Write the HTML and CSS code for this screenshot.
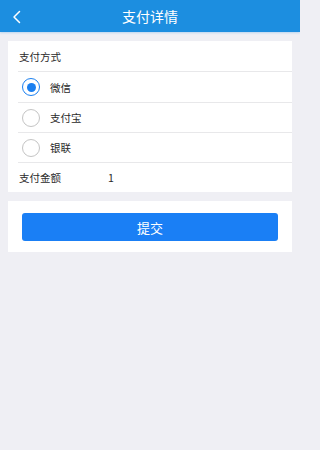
FILE: index.html
```html
<!DOCTYPE html>
<html lang="zh">
<head>
<meta charset="utf-8">
<link rel="stylesheet" href="styles.css">
</head>
<body>
<header class="nav">
  <svg class="back" width="10" height="14" viewBox="0 0 10 14"><path d="M7.5 1.5 L2 7 L7.5 12.5" fill="none" stroke="#fff" stroke-width="1.5" stroke-linecap="round" stroke-linejoin="round"/></svg>
  <h1 class="title">支付详情</h1>
</header>
<section class="card">
  <div class="row head">支付方式</div>
  <div class="list">
    <div class="row opt first"><span class="radio on"></span><span class="lbl">微信</span></div>
    <div class="row opt"><span class="radio"></span><span class="lbl">支付宝</span></div>
    <div class="row opt"><span class="radio"></span><span class="lbl">银联</span></div>
    <div class="row amount"><span class="k">支付金额</span><span class="v">1</span></div>
  </div>
</section>
<section class="card submit-card">
  <button class="submit">提交</button>
</section>
</body>
</html>
```
FILE: styles.css
```css
html, body {
  margin: 0;
  padding: 0;
  background: #efeff4;
  font-family: "Noto Sans CJK SC", "Noto Sans", sans-serif;
  color: #2a2a2a;
}
body {
  width: 300px;
}
.nav {
  height: 32px;
  background: #1c8ee0;
  display: flex;
  align-items: center;
  justify-content: center;
  position: relative;
  box-shadow: 0 1px 2px rgba(27,141,224,0.25);
}
.back {
  position: absolute;
  left: 12px;
  top: 10px;
}
.title {
  margin: 0;
  font-size: 14px;
  font-weight: normal;
  color: #fff;
}
.card {
  background: #fff;
  margin: 9px 8px 0;
}
.row {
  height: 30px;
  box-sizing: border-box;
  display: flex;
  align-items: center;
  font-size: 10.5px;
}
.head {
  padding-left: 11px;
}
.list {
  margin-left: 10px;
}
.list .row {
  border-top: 1px solid #e8e8ea;
}
.list .first {
  height: 31px;
}
.opt {
  padding-left: 4px;
}
.radio {
  width: 18px;
  height: 18px;
  border: 1px solid #c4c4c4;
  border-radius: 50%;
  box-sizing: border-box;
  display: flex;
  align-items: center;
  justify-content: center;
}
.radio.on {
  border: 1.5px solid #1a7ff0;
}
.radio.on::after {
  content: "";
  width: 9px;
  height: 9px;
  border-radius: 50%;
  background: #1a7ff0;
}
.lbl {
  margin-left: 10px;
}
.amount {
  margin-left: -10px;
  padding-left: 11px;
  border-top: none !important;
  position: relative;
}
.amount::before {
  content: "";
  position: absolute;
  left: 10px;
  right: 0;
  top: 0;
  border-top: 1px solid #e8e8ea;
}
.amount .v {
  margin-left: 47px;
}
.submit-card {
  padding: 12px 14px 11px;
}
.submit {
  display: block;
  width: 100%;
  height: 28px;
  border: none;
  border-radius: 3px;
  background: #1a7ff5;
  color: #fff;
  font-family: inherit;
  font-size: 13px;
  padding: 0;
}
```
